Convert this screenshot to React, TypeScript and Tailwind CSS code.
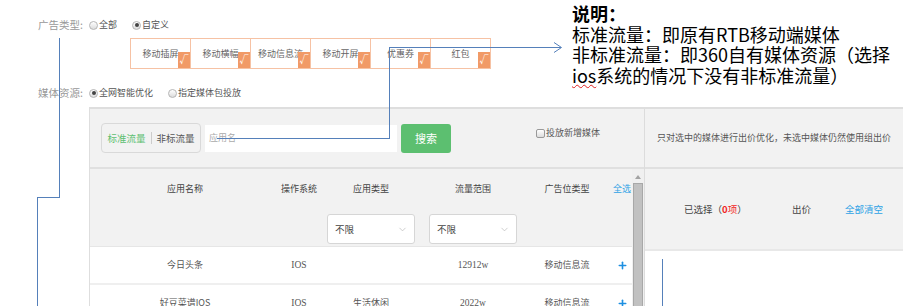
import { ChevronDown, Plus } from "lucide-react";

// Radio renders a small round radio mark with its label
function Radio({ label, checked }: { label: string; checked?: boolean }) {
  return (
    <span className="flex items-center gap-[1px] text-[9px] text-[#555]">
      <span className="flex h-[9px] w-[9px] items-center justify-center rounded-full border border-[#b5b5b5] bg-gradient-to-b from-white to-[#dcdcdc]">
        {checked && <span className="h-[4px] w-[4px] rounded-full bg-[#444]" />}
      </span>
      {label}
    </span>
  );
}

// Chip renders one ad type with the orange check badge
function Chip({ label }: { label: string }) {
  return (
    <div className="relative -ml-px flex h-[31px] w-[61px] items-center justify-center border border-[#f6c2a4] text-[9px] text-[#666] first:ml-0">
      {label}
      <span className="absolute bottom-0 right-0 flex h-[16px] w-[12px] items-center justify-center bg-[#f19a67] text-[9px] font-bold text-white">
        √
      </span>
    </div>
  );
}

// Select renders the white "不限" dropdown
function Select() {
  return (
    <div className="flex h-[30px] w-[88px] items-center justify-between rounded-[3px] border border-[#d6d6d6] bg-white pl-[7px] pr-[6px] text-[9.5px] text-[#444]">
      不限
      <ChevronDown size={11} strokeWidth={1.5} color="#b8b8b8" />
    </div>
  );
}

const cols = "grid grid-cols-[190px_38px_106px_98px_90px_20px] items-center text-center";

// Row renders a media row in the table
function Row({ name, os, type, range, slot }: { name: string; os: string; type: string; range: string; slot: string }) {
  return (
    <div className={`${cols} h-[36px] bg-white text-[9px] text-[#555]`}>
      <span>{name}</span>
      <span className="font-['Liberation_Serif',serif] text-[9.5px]">{os}</span>
      <span>{type}</span>
      <span className="font-['Liberation_Serif',serif] text-[9.5px]">{range}</span>
      <span>{slot}</span>
      <span className="flex justify-center">
        <Plus size={11} strokeWidth={3.5} color="#1d8fe1" />
      </span>
    </div>
  );
}

export default function App() {
  const line = "absolute bg-[#5580ba]";
  return (
    <div className="relative h-[306px] w-[903px] overflow-hidden bg-white font-['Noto_Sans_CJK_SC',sans-serif]">
      {/* 广告类型 */}
      <div className="ml-[38px] mt-[18px] flex h-[14px] items-center">
        <span className="w-[51px] text-[10.5px] text-[#999]">广告类型:</span>
        <div className="flex items-center gap-[15px]">
          <Radio label="全部" />
          <Radio label="自定义" checked />
        </div>
      </div>
      <div className="ml-[130px] mt-[6px] flex">
        {["移动插屏", "移动横幅", "移动信息流", "移动开屏", "优惠券", "红包"].map((c) => (
          <Chip key={c} label={c} />
        ))}
      </div>

      {/* 媒体资源 */}
      <div className="ml-[38px] mt-[17px] flex h-[14px] items-center">
        <span className="w-[51px] text-[10.5px] text-[#999]">媒体资源:</span>
        <div className="flex items-center gap-[15px]">
          <Radio label="全网智能优化" checked />
          <Radio label="指定媒体包投放" />
        </div>
      </div>

      {/* panel */}
      <div className="ml-[89px] mt-[7px] flex h-[200px] border-l border-t-2 border-[#dedede]">
        <div className="flex w-[554px] flex-col">
          <div className="flex h-[60px] shrink-0 items-center border-b-2 border-[#e0e0e0] bg-[#f2f2f2] pl-[11px]">
            <div className="flex h-[30px] w-[100px] items-center justify-center gap-[5px] rounded-[4px] border border-[#d9d9d9] text-[9.5px]">
              <span className="text-[#5cbf70]">标准流量</span>
              <span className="h-[12px] w-px bg-[#ccc]" />
              <span className="text-[#555]">非标流量</span>
            </div>
            <div className="ml-[4px] flex h-[27px] w-[192px] items-center bg-white pl-[4px] text-[9px] text-[#aaa]">应用名</div>
            <div className="ml-[4px] flex h-[29px] w-[50px] items-center justify-center rounded-[3px] bg-[#5cbf70] text-[11px] text-white">
              搜索
            </div>
            <div className="mb-[10px] ml-[85px] flex items-center text-[9px] text-[#555]">
              <span className="mr-px h-[9px] w-[9px] rounded-[2px] border border-[#999] bg-gradient-to-b from-white to-[#ddd]" />
              投放新增媒体
            </div>
          </div>
          <div className="flex flex-1 overflow-hidden">
            <div className="w-[542px]">
              <div className="h-[78px] border-b border-[#e6e6e6] bg-[#f2f2f2]">
                <div className={`${cols} h-[40px] text-[9px] text-[#444]`}>
                  <span>应用名称</span>
                  <span>操作系统</span>
                  <span>应用类型</span>
                  <span>流量范围</span>
                  <span>广告位类型</span>
                  <span className="text-[#2ea2e6]">全选</span>
                </div>
                <div className="mt-[5px] grid grid-cols-[190px_38px_106px_98px_90px_20px]">
                  <span />
                  <span />
                  <div className="pl-[9px]">
                    <Select />
                  </div>
                  <div className="pl-[5px]">
                    <Select />
                  </div>
                </div>
              </div>
              <Row name="今日头条" os="IOS" type="" range="12912w" slot="移动信息流" />
              <div className="h-[2px] bg-[#efefef]" />
              <Row name="好豆菜谱IOS" os="IOS" type="生活休闲" range="2022w" slot="移动信息流" />
            </div>
            <div className="flex w-[12px] flex-col items-center bg-[#f0f0f0]">
              <span className="mt-[6px] h-0 w-0 border-x-[3px] border-b-[4px] border-x-transparent border-b-[#a3a3a3]" />
              <span className="mt-[4px] w-[10px] flex-1 border border-[#a8a8a8] bg-[#c1c1c1]" />
            </div>
          </div>
        </div>
        <div className="flex flex-1 flex-col border-l border-[#dcdcdc]">
          <div className="flex h-[60px] shrink-0 items-center justify-center border-b-2 border-[#e0e0e0] bg-[#f2f2f2] text-[9px] text-[#555]">
            只对选中的媒体进行出价优化，未选中媒体仍然使用组出价
          </div>
          <div className="flex h-[82px] shrink-0 items-center whitespace-nowrap border-b-2 border-[#e8e8e8] bg-[#f2f2f2] pl-[39px] text-[9.5px] text-[#444]">
            <span className="w-[56px]">
              已选择（<span className="font-bold text-[#f21f1f]">0</span>
              <span className="text-[#f21f1f]">项</span>）
            </span>
            <span className="ml-[52px]">出价</span>
            <span className="ml-[34px] text-[#2ea2e6]">全部清空</span>
          </div>
          <div className="flex-1 bg-white" />
        </div>
      </div>

      {/* annotation text */}
      <div className="absolute left-[572px] top-[3px] text-[18px] leading-[20.5px] text-black">
        <div className="font-bold">说明：</div>
        <div>标准流量：即原有RTB移动端媒体</div>
        <div>非标准流量：即360自有媒体资源（选择</div>
        <div>
          <span className="underline decoration-[#e02020] decoration-wavy decoration-1">ios</span>
          系统的情况下没有非标准流量）
        </div>
      </div>

      {/* annotation lines */}
      <div className={`${line} left-[59px] top-[38px] h-[160px] w-px`} />
      <div className={`${line} left-[37px] top-[197px] h-px w-[23px]`} />
      <div className={`${line} left-[37px] top-[197px] h-[109px] w-px`} />
      <div className={`${line} left-[217px] top-[138px] h-px w-[173px]`} />
      <div className={`${line} left-[389px] top-[47px] h-[92px] w-px`} />
      <div className={`${line} left-[389px] top-[47px] h-px w-[172px]`} />
      <svg className="absolute left-[553px] top-[42px]" width="10" height="11" viewBox="0 0 10 11">
        <path d="M1 0.5 L8.5 5.5 L1 10.5" fill="none" stroke="#5580ba" strokeWidth="1" />
      </svg>
      <div className={`${line} left-[662px] top-[259px] h-[47px] w-px`} />
    </div>
  );
}
